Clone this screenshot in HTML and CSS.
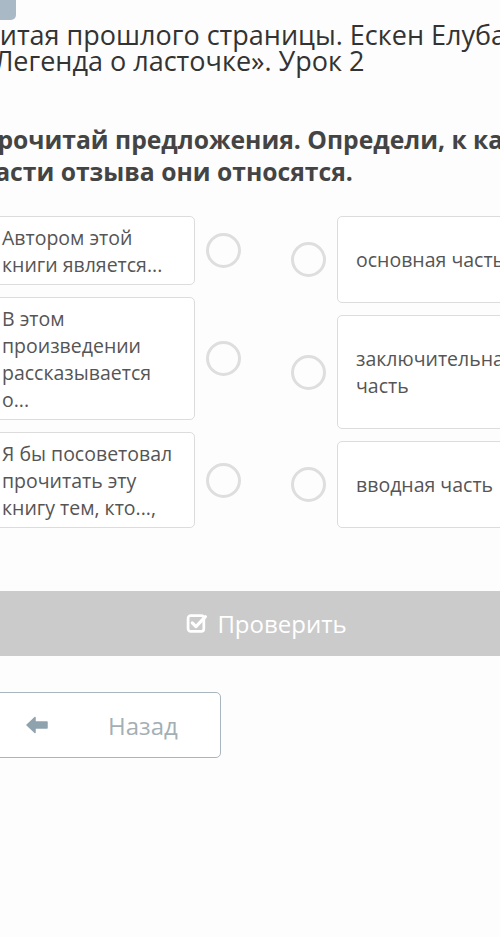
FILE: index.html
```html
<!DOCTYPE html>
<html lang="ru">
<head>
    <meta charset="UTF-8">
    <meta name="viewport" content="width=device-width, initial-scale=1.0">
    <title>Урок 2</title>
    <link rel="stylesheet" href="styles.css">
</head>
<body>
    <div class="page">
        <div class="tab"></div>
        <h1 class="lesson-title">Читая прошлого страницы. Ескен Елубаев «Легенда о ласточке». Урок 2</h1>

        <h2 class="question">Прочитай предложения. Определи, к какой части отзыва они относятся.</h2>

        <div class="match">
            <div class="column">
                <div class="item">
                    <div class="card left">Автором этой книги является...</div>
                    <span class="dot"></span>
                </div>
                <div class="item">
                    <div class="card left">В этом произведении рассказывается о...</div>
                    <span class="dot"></span>
                </div>
                <div class="item">
                    <div class="card left">Я бы посоветовал прочитать эту книгу тем, кто...,</div>
                    <span class="dot"></span>
                </div>
            </div>
            <div class="column">
                <div class="item">
                    <span class="dot"></span>
                    <div class="card right">основная часть</div>
                </div>
                <div class="item">
                    <span class="dot"></span>
                    <div class="card right">заключительная часть</div>
                </div>
                <div class="item">
                    <span class="dot"></span>
                    <div class="card right">вводная часть</div>
                </div>
            </div>
        </div>

        <button class="check-btn">
            <svg class="check-icon" viewBox="0 0 20 20" width="22" height="21">
                <rect x="1.5" y="2.5" width="15" height="15" rx="2.5" fill="none" stroke="#fff" stroke-width="2.6"/>
                <path d="M5.5 9.5 L9 13 L18 3.5" fill="none" stroke="#fff" stroke-width="3" stroke-linecap="round" stroke-linejoin="round"/>
            </svg>
            Проверить
        </button>

        <button class="back-btn">
            <svg class="back-icon" viewBox="0 0 22 18" width="22" height="18">
                <path d="M1 9 L9 1.5 L9 6 L21 6 L21 12 L9 12 L9 16.5 Z" fill="#8fa3ae" stroke="#8fa3ae" stroke-width="1.5" stroke-linejoin="round"/>
            </svg>
            <span>Назад</span>
        </button>
    </div>
</body>
</html>
```

FILE: styles.css
```css
/* Global Styles */
body {
    font-family: "Open Sans", "Noto Sans", sans-serif;
    background-color: #fdfdfd;
    color: #333;
    margin: 0;
    padding: 0;
    overflow: hidden;
}
.page {
    width: 565px;
    margin-left: -16px;
}
.tab {
    width: 32px;
    height: 20px;
    background-color: #a9bac6;
    border-radius: 0 0 5px 0;
}
.lesson-title {
    font-size: 27px;
    font-weight: normal;
    line-height: 26px;
    color: #333;
    margin: 2px -80px 0 -3px;
}
.question {
    font-size: 24.7px;
    font-weight: bold;
    line-height: 32px;
    color: #444;
    margin: 50px -5px 0 -5px;
}

/* Matching */
.match {
    display: flex;
    justify-content: space-between;
    margin-top: 28px;
}
.column {
    display: flex;
    flex-direction: column;
    gap: 12px;
}
.item {
    display: flex;
    align-items: center;
    gap: 11px;
}
.card {
    width: 175px;
    background-color: #fff;
    border: 1px solid #dcdcdc;
    border-radius: 5px;
    font-size: 19.5px;
    line-height: 27px;
    color: #555;
}
.card.left {
    padding: 7px 17px 6px 17px;
}
.card.right {
    padding: 29px 17px 29px 18px;
}
.dot {
    flex: none;
    width: 29px;
    height: 29px;
    border: 3px solid #dedede;
    border-radius: 50%;
}

/* Buttons */
.check-btn {
    display: flex;
    align-items: center;
    justify-content: center;
    gap: 9px;
    width: 565px;
    height: 65px;
    margin-top: 63px;
    border: none;
    background-color: #cbcbcb;
    color: #fff;
    font-family: "Open Sans", "Noto Sans", sans-serif;
    font-size: 24px;
    padding: 0;
}
.back-btn {
    display: flex;
    align-items: center;
    width: 237px;
    height: 66px;
    margin-top: 36px;
    border: 1.5px solid #a9b6bd;
    border-radius: 5px;
    background-color: #fff;
    color: #a3afb5;
    font-family: "Open Sans", "Noto Sans", sans-serif;
    font-size: 24px;
    padding: 0 0 0 41px;
}
.back-btn span {
    margin-left: 60px;
}
```
